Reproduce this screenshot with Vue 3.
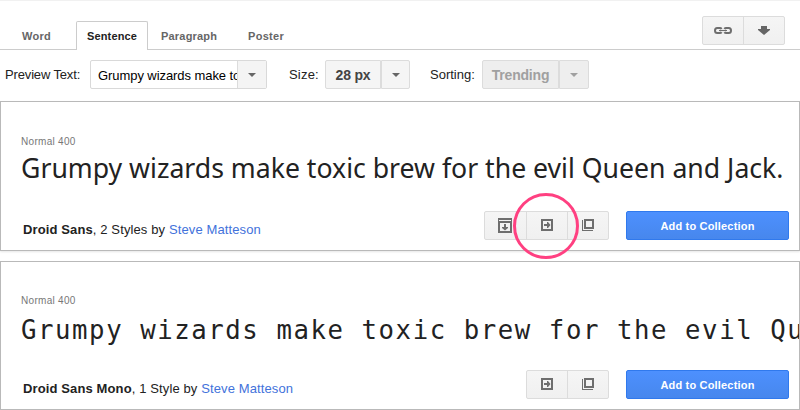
<script setup>
const tabs = ['Word', 'Sentence', 'Paragraph', 'Poster']
const activeTab = 'Sentence'
const sentence = 'Grumpy wizards make toxic brew for the evil Queen and Jack.'
const fonts = [
  { name: 'Droid Sans', styles: '2 Styles', author: 'Steve Matteson', face: 'sans', actions: ['save', 'popout', 'compare'], marked: 'popout' },
  { name: 'Droid Sans Mono', styles: '1 Style', author: 'Steve Matteson', face: 'mono', actions: ['popout', 'compare'], marked: null }
]
</script>

<template>
  <div class="page">
    <header class="top">
      <nav class="tabs">
        <a v-for="t in tabs" :key="t" class="tab" :class="[t.toLowerCase(), { active: t === activeTab }]"><span>{{ t }}</span></a>
      </nav>
      <div class="group top-group">
        <button class="cell" aria-label="Link">
          <svg width="18" height="7" viewBox="0 0 18 7" fill="none" stroke="#6e6e6e">
            <path d="M7.600 1.900C7.200 1.200 6.600 1 5.800 1H3.200C1.700 1 1 1.900 1 3.500S1.700 6 3.200 6h2.600c.8 0 1.400-.3 1.800-.9M10.400 1.900c.4-.7 1-.9 1.800-.9h2.600C16.300 1 17 1.900 17 3.500S16.300 6 14.800 6h-2.600c-.8 0-1.400-.3-1.800-.9" stroke-width="2" />
            <path d="M5 3.500h8" stroke-width="1.100" />
          </svg>
        </button>
        <button class="cell" aria-label="Download">
          <svg width="12" height="9" viewBox="0 0 12 9"><path d="M3 0h6v3h3v1L6 9 0 4V3h3z" fill="#666" /></svg>
        </button>
      </div>
    </header>

    <section class="controls">
      <label class="lbl-preview">Preview Text:</label>
      <div class="combo">
        <div class="combo-text">Grumpy wizards make toxic</div>
        <div class="combo-arrow"><i class="caret"></i></div>
      </div>
      <label class="lbl-size">Size:</label>
      <div class="split">
        <div class="split-main size">28 px</div>
        <div class="split-arrow"><i class="caret"></i></div>
      </div>
      <label class="lbl-sort">Sorting:</label>
      <div class="split disabled">
        <div class="split-main trending">Trending</div>
        <div class="split-arrow"><i class="caret"></i></div>
      </div>
    </section>

    <main class="cards">
      <article v-for="f in fonts" :key="f.name" class="card">
        <div class="weight">Normal 400</div>
        <div class="sample"><span :class="f.face">{{ sentence }}</span></div>
        <footer class="foot">
          <p class="meta"><b>{{ f.name }}</b>, {{ f.styles }} by <a>{{ f.author }}</a></p>
          <div class="group">
            <button v-for="a in f.actions" :key="a" class="cell" :class="a" :aria-label="a">
              <svg v-if="a === 'save'" width="14" height="15" viewBox="0 0 14 15" fill="#6e6e6e">
                <path fill-rule="evenodd" d="M0 0h14v15H0zM1 2v1h12V2zM2 5v8h10V5z" />
                <path d="M6 6h2v3h2v1l-3 2.500L4 10V9h2z" />
              </svg>
              <svg v-else-if="a === 'popout'" width="12" height="12" viewBox="0 0 12 12" fill="#6e6e6e">
                <path fill-rule="evenodd" d="M0 0h12v12H0zM2 2v8h8V2z" />
                <path d="M3 5h3V3h1l2.500 3L7 9H6V7H3z" />
              </svg>
              <svg v-else width="12" height="12" viewBox="0 0 12 12" fill="#6e6e6e">
                <path fill-rule="evenodd" d="M2 0h10v10H2zM4 2v6h6V2z" />
                <path d="M0 1h1v10h10v1H0z" />
              </svg>
              <span v-if="a === f.marked" class="ring"></span>
            </button>
          </div>
          <button class="add"><span>Add to Collection</span></button>
        </footer>
      </article>
    </main>
  </div>
</template>

<style>
body { margin: 0; background: #fff; overflow: hidden; }
</style>

<style scoped>
* { box-sizing: border-box; }
.page { width: 800px; height: 410px; overflow: hidden; border-top: 1px solid #f1f1f1; font-family: "Liberation Sans", Arial, sans-serif; font-size: 13px; color: #222; }
button { margin: 0; padding: 0; font-family: inherit; }
.top { height: 49px; display: flex; justify-content: space-between; align-items: flex-start; border-bottom: 1px solid #ccc; }
.tabs { display: flex; align-self: flex-end; height: 29px; margin-bottom: -1px; }
.tab { font-weight: bold; font-size: 11px; line-height: 30px; color: #666; letter-spacing: .3px; white-space: nowrap; }
.word { width: 76px; padding-left: 22px; }
.sentence { width: 72px; padding-left: 10px; }
.paragraph { width: 87px; padding-left: 13px; letter-spacing: .2px; }
.poster { padding-left: 13px; }
.active { color: #222; line-height: 28px; letter-spacing: .15px; background: #fff; border: 1px solid #ccc; border-bottom: 0; border-radius: 2px 2px 0 0; }
.top-group { margin: 15px 15px 0 0; }
.group { display: flex; height: 29px; border: 1px solid #dcdcdc; border-radius: 2px; background: linear-gradient(#f5f5f5, #f0f0f0); }
.cell { position: relative; width: 41px; height: 27px; border: 0; border-left: 1px solid #dcdcdc; background: none; display: flex; align-items: center; justify-content: center; }
.cell:first-child { border-left: 0; width: 40px; }
.cell.save { width: 41px; padding: 0 1px 0 0; }
.cell.popout { padding-bottom: 1px; padding-right: 1px; }
.cell.popout:first-child { padding-right: 0; }
.cell.compare { padding-bottom: 1px; }
.controls { display: flex; align-items: center; height: 29px; margin-top: 10px; padding-left: 5px; white-space: nowrap; }
.lbl-preview { width: 85px; letter-spacing: -.15px; }
.lbl-size { margin-left: 22px; width: 36px; letter-spacing: .2px; }
.lbl-sort { margin-left: 20px; width: 52px; }
.combo { width: 177px; height: 29px; display: flex; border: 1px solid #d9d9d9; border-radius: 2px; }
.combo-text { width: 146px; padding-left: 7px; line-height: 29px; color: #000; overflow: hidden; letter-spacing: -.07px; }
.combo-arrow { flex: 1; background: #f4f4f4; border-left: 1px solid #dcdcdc; display: flex; align-items: center; justify-content: center; }
.caret { width: 0; height: 0; border: 4px solid transparent; border-top-color: #666; border-bottom: 0; }
.split { display: flex; height: 29px; }
.split-main, .split-arrow { height: 29px; border: 1px solid #dcdcdc; background: #f5f5f5; }
.split-main { border-radius: 2px 0 0 2px; font-weight: bold; font-size: 14px; line-height: 28px; text-align: center; color: #444; letter-spacing: -.2px; }
.split-arrow { width: 29px; border-radius: 0 2px 2px 0; display: flex; align-items: center; justify-content: center; }
.size { width: 56px; }
.trending { width: 77px; }
.disabled .split-arrow { width: 30px; }
.disabled .split-main, .disabled .split-arrow { background: #eee; color: #a0a0a0; }
.disabled .caret { border-top-color: #a0a0a0; }
.cards { display: flex; flex-direction: column; gap: 10px; margin-top: 12px; }
.card { height: 150px; border: 1px solid #b9b9b9; box-shadow: 0 1px 2px rgba(0,0,0,.1); display: flex; flex-direction: column; }
.card + .card { height: 149px; box-shadow: none; }
.weight { margin: 33px 0 0 20px; height: 14px; line-height: 14px; font-size: 10px; color: #777; letter-spacing: .3px; }
.card + .card .weight { margin-top: 32px; }
.sample { height: 40px; line-height: 36px; padding-left: 20px; white-space: nowrap; overflow: hidden; color: #222; }
.sample span { display: inline-block; transform-origin: 0 0; }
.sample .sans { font-family: "Noto Sans", "Open Sans", sans-serif; font-size: 28px; transform: scaleX(.951); }
.sample .mono { line-height: 44px; font-family: "DejaVu Sans Mono", monospace; font-size: 27px; letter-spacing: 1.65px; transform: scaleX(.951); }
.foot { display: flex; margin-top: 22px; padding: 0 10px 0 22px; height: 29px; }
.meta { flex: 1; margin: 0; line-height: 38px; letter-spacing: .12px; white-space: nowrap; }
.meta a { color: #4272db; }
.add { margin-left: 17px; width: 163px; height: 29px; border: 1px solid #3079ed; border-radius: 2px; background: linear-gradient(#4d90fe, #4787ed); color: #fff; font-weight: bold; font-size: 11px; letter-spacing: .18px; }
.ring { position: absolute; left: -14px; top: -19px; width: 66px; height: 66px; border: 3px solid #ff4081; border-radius: 50%; pointer-events: none; z-index: 2; }
</style>
